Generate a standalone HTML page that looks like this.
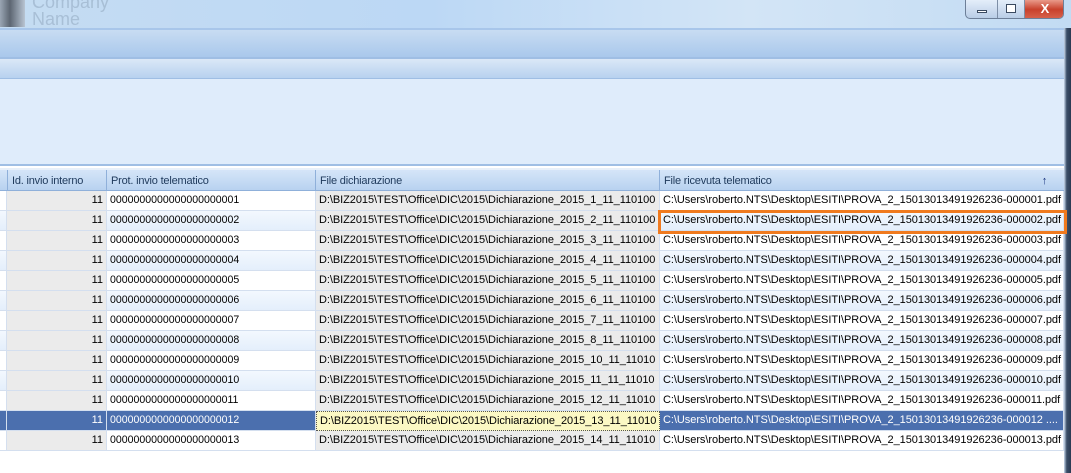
<!DOCTYPE html><html><head><style>
*{margin:0;padding:0;box-sizing:border-box}
body{width:1071px;height:473px;overflow:hidden;background:#fff;font-family:"Liberation Sans",sans-serif;font-size:11px;color:#000;position:relative}
.a{position:absolute}
.row{position:absolute;left:0;width:1064px;height:20px}
.c{position:absolute;top:0;height:20px;line-height:19px;white-space:nowrap;overflow:hidden;border-right:1px solid #d4dfef;border-bottom:1px solid #d4dfef;padding:0 3px}
.s{display:inline-block;transform:scaleX(0.96);transform-origin:0 0}
</style></head><body>
<div class="a" style="left:0;top:0;width:1071px;height:28px;background:linear-gradient(90deg,#c5dcf2,#bcd8f5 40%,#d3e5f6 70%,#c2dbf3)"></div>
<div class="a" style="left:0;top:0;width:25px;height:27px;background:linear-gradient(90deg,#9aa6b4,#5d6672 40%,#b8c4d2)"></div>
<div class="a" style="left:32px;top:-6px;font-size:18px;color:#a8bfd6;line-height:17px">Company<br>Name</div>
<div class="a" style="left:965px;top:0;width:99px;height:19px;border:1px solid #6d7f98;border-top:none;border-radius:0 0 5px 5px;overflow:hidden;background:linear-gradient(#e4eefa,#b9cde6)">
<div class="a" style="left:0;top:0;width:32px;height:19px;border-right:1px solid #7d8ea6"><div class="a" style="left:11px;top:10px;width:10px;height:3px;border:1px solid #3a4a60;background:#fff"></div></div>
<div class="a" style="left:32px;top:0;width:27px;height:19px;border-right:1px solid #7d8ea6"><div class="a" style="left:8px;top:4px;width:10px;height:9px;border:1px solid #3a4a60;background:#fff"></div></div>
<div class="a" style="left:59px;top:0;width:40px;height:19px;background:linear-gradient(#e99a8a,#c8412c 50%,#d8644e);color:#fff;font-weight:bold;font-size:13px;text-align:center;line-height:17px">X</div></div>
<div class="a" style="left:0;top:28px;width:1064px;height:31px;background:linear-gradient(#c8dcf2,#a9c8ec);border-top:2px solid #a8c6ea;border-bottom:2px solid #9fbee4"></div>
<div class="a" style="left:0;top:59px;width:1064px;height:20px;background:linear-gradient(#dbe8f7,#b7d1ef);border-bottom:1px solid #9fbee4"></div>
<div class="a" style="left:0;top:79px;width:1064px;height:87px;background:#dfecfb;border-bottom:2px solid #9fbee4"></div>
<div class="a" style="left:1064px;top:28px;width:7px;height:445px;background:linear-gradient(90deg,#c9d9ec,#3b4e68 40%,#2a3a52)"></div>
<div class="a" style="left:0;top:168px;width:1064px;height:23px;background:linear-gradient(#d5e5f8,#b8d2f0);border-top:2px solid #e8f0fa;border-bottom:1px solid #8fb0da;color:#1e395b;letter-spacing:-0.2px">
<div class="a" style="left:7px;top:0;width:100px;height:22px;border-left:1px solid #8fb0da;border-right:1px solid #8fb0da;line-height:22px;padding-left:4px">Id. invio interno</div>
<div class="a" style="left:107px;top:0;width:209px;height:22px;border-right:1px solid #8fb0da;line-height:22px;padding-left:4px">Prot. invio telematico</div>
<div class="a" style="left:316px;top:0;width:344px;height:22px;border-right:1px solid #8fb0da;line-height:22px;padding-left:4px">File dichiarazione</div>
<div class="a" style="left:660px;top:0;width:404px;height:22px;line-height:22px;padding-left:4px">File ricevuta telematico<span class="a" style="right:17px;top:0;color:#14307a;font-weight:bold">↑</span></div></div>
<div id="rows"></div>
<script>
var h='';
for(var i=1;i<=13;i++){var y=191+(i-1)*20;var n=(i<10?'0':'')+i;var sel=i==12;
var bg=sel?'#4b6fae':(i%2==0?'linear-gradient(#f3f8fe,#e3eefb)':'#fff');
var fg=sel?'#fff':'#000';
var k=i<=8?i:i+1;
var d='D:\\BIZ2015\\TEST\\Office\\DIC\\2015\\Dichiarazione_2015_'+k+'_11_'+(i<=8?'110100':'11010');
var f='C:\\Users\\roberto.NTS\\Desktop\\ESITI\\PROVA_2_15013013491926236-0000'+n+(sel?' ....':'.pdf');
h+='<div class="row" style="top:'+y+'px;background:'+bg+';color:'+fg+'">'+
'<div class="c" style="left:0;width:7px"></div>'+
'<div class="c" style="left:7px;width:100px;text-align:right;background:'+(sel?'#4b6fae':'#ebebeb')+'">11</div>'+
'<div class="c" style="left:107px;width:209px"><span class="s">00000000000000000000'+n+'</span></div>'+
'<div class="c" style="left:316px;width:344px;letter-spacing:-0.06px;'+(sel?'background:#fbf8c4;color:#000;border:1px dotted #555':'background:#ebebeb')+'">'+d+'</div>'+
'<div class="c" style="left:660px;width:404px;letter-spacing:-0.05px">'+f+'</div></div>';}
h+='<div class="a" style="left:658px;top:210px;width:409px;height:24px;border:3px solid #f07a1e"></div>';
document.getElementById('rows').innerHTML=h;
</script>
</body></html>
